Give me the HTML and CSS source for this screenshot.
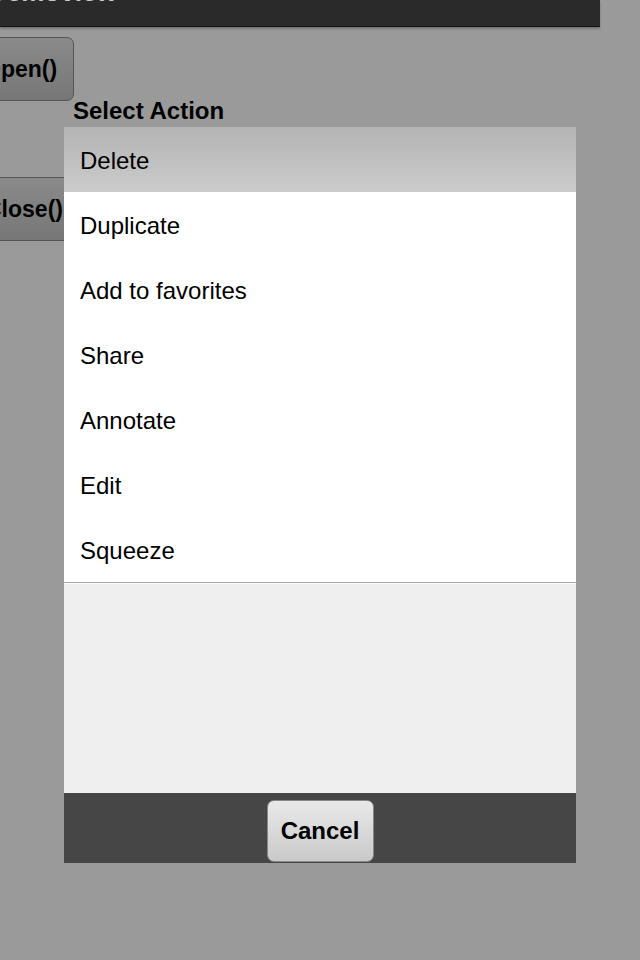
FILE: index.html
```html
<!DOCTYPE html>
<html lang="en">

<head>
    <meta charset="UTF-8">
    <meta name="viewport" content="width=device-width, initial-scale=1.0">
    <title>Demoview</title>
    <link rel="stylesheet" href="styles.css">
</head>

<body>

    <div id="header">
        <h1>Demoview</h1>
    </div>

    <div id="buttons">
        <button class="btn open">Open()</button>
        <button class="btn close">Close()</button>
    </div>

    <div id="sheet">
        <div class="sheet-title">Select Action</div>
        <ul class="sheet-list">
            <li class="active">Delete</li>
            <li>Duplicate</li>
            <li>Add to favorites</li>
            <li>Share</li>
            <li>Annotate</li>
            <li>Edit</li>
            <li>Squeeze</li>
        </ul>
        <div class="sheet-empty"></div>
        <div class="sheet-footer">
            <button class="cancel">Cancel</button>
        </div>
    </div>

</body>

</html>
```

FILE: styles.css
```css
* {
    box-sizing: border-box;
}

body {
    margin: 0;
    background: #9a9a9a;
    font-family: "Liberation Sans", Arial, sans-serif;
    overflow: hidden;
}

#header {
    width: 600px;
    height: 27px;
    background: #2a2a2a;
    border-bottom: 1px solid #111;
    box-shadow: 0 2px 2px rgba(0, 0, 0, 0.25);
    overflow: hidden;
}

#header h1 {
    margin: -23px 0 0 -12px;
    font-size: 26px;
    line-height: 30px;
    color: #c8c8c8;
    text-shadow: 0 -1px 0 #000;
}

#buttons {
    display: flex;
    flex-direction: column;
    align-items: flex-start;
    gap: 76px;
    padding-top: 10px;
}

.btn {
    height: 64px;
    margin-left: -34px;
    padding: 0 16px;
    font-family: inherit;
    font-size: 23px;
    font-weight: bold;
    color: #000;
    border: 1px solid #555;
    border-radius: 7px;
    background: linear-gradient(#8a8a8a, #777);
}

.btn.close {
    margin-left: -32px;
}

#sheet {
    position: absolute;
    left: 64px;
    top: 99px;
    width: 512px;
}

.sheet-title {
    padding-left: 9px;
    margin-bottom: 4px;
    font-size: 24px;
    line-height: 24px;
    font-weight: bold;
    color: #000;
}

.sheet-list {
    margin: 0;
    padding: 0;
    list-style: none;
    background: #fff;
}

.sheet-list li {
    height: 65px;
    padding: 3px 0 0 16px;
    line-height: 62px;
    font-size: 24px;
    color: #000;
}

.sheet-list li.active {
    background: linear-gradient(#b4b4b4, #cbcbcb);
}

.sheet-empty {
    height: 211px;
    background: #efefef;
    border-top: 1px solid #aaa;
    box-shadow: inset 0 1px 0 #fafafa;
}

.sheet-footer {
    height: 70px;
    padding-top: 7px;
    background: #464646;
    display: flex;
    justify-content: center;
    align-items: flex-start;
}

.cancel {
    width: 107px;
    height: 62px;
    font-family: inherit;
    font-size: 24px;
    font-weight: bold;
    color: #000;
    border: 1px solid #888;
    border-radius: 7px;
    background: linear-gradient(#e9e9e9, #c9c9c9);
}
```
